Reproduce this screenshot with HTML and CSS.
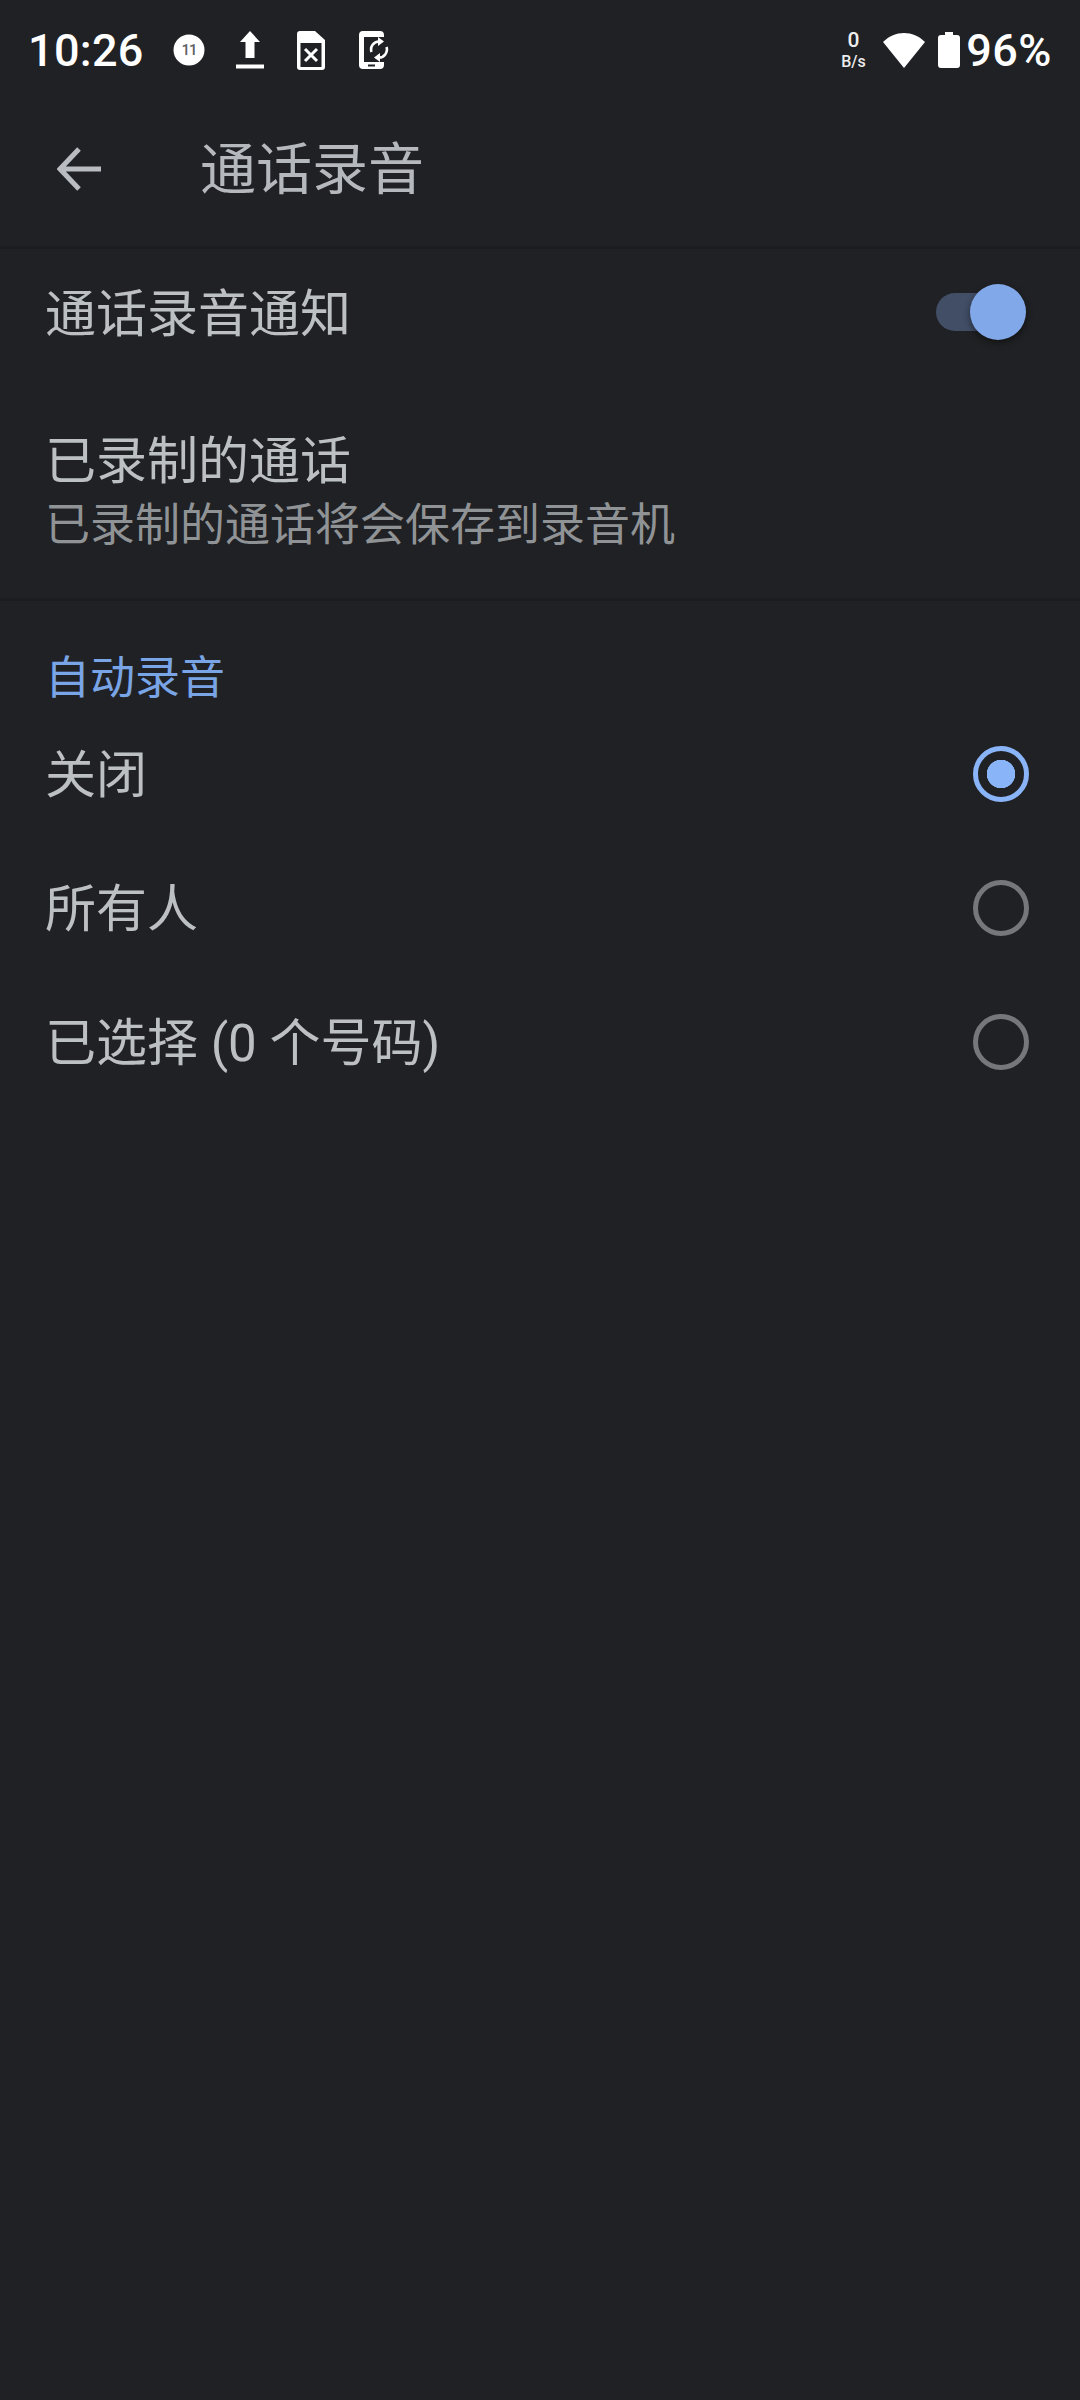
FILE: index.html
```html
<!DOCTYPE html>
<html lang="zh-CN">
<head>
<meta charset="utf-8">
<title>通话录音</title>
<link rel="stylesheet" href="styles.css">
</head>
<body>
<div class="status">
  <span class="time">10:26</span>
  <div class="status-icons">
    <svg class="ic-num" width="32" height="32" viewBox="0 0 32 32"><circle cx="16" cy="16" r="15.5" fill="#fff"/><text x="16" y="21" text-anchor="middle" class="n11">11</text></svg>
    <svg class="ic-up" width="28" height="38" viewBox="0 0 28 38"><path d="M14 0 L24 11 H18.5 V27 H9.5 V11 H4 Z M0 33.500 H28 V37.500 H0 Z" fill="#fff"/></svg>
    <svg class="ic-sim" width="28" height="40" viewBox="0 0 28 40"><path fill-rule="evenodd" d="M3 1 H18 L28 10 V37 A3 3 0 0 1 25 40 H3 A3 3 0 0 1 0 37 V4 A3 3 0 0 1 3 1 Z M3.500 13 V37 H24.500 V13 Z" fill="#fff"/><path d="M8 19 L20 31 M20 19 L8 31" stroke="#fff" stroke-width="3"/></svg>
    <svg class="ic-ph" width="30" height="40" viewBox="0 0 30 40"><path d="M4 1 H21 A4 4 0 0 1 25 5 V7 H5 V32 H25 V35 A4 4 0 0 1 21 39 H4 A4 4 0 0 1 0 35 V5 A4 4 0 0 1 4 1 Z" fill="#fff"/><path d="M9 35.500 H16" stroke="#202124" stroke-width="2"/><path d="M12.500 22 A8 8 0 0 1 20 11.500 M27.500 17 A8 8 0 0 1 20 27.500" fill="none" stroke="#fff" stroke-width="2.600"/><path d="M19 7 L25 11.500 L19 16 Z M21 23 L15 27.500 L21 32 Z" fill="#fff"/></svg>
  </div>
  <div class="status-right">
    <div class="speed"><b>0</b><small>B/s</small></div>
    <svg class="wifi" width="42" height="35" viewBox="0 0 42 35"><path d="M21 35 L0 9 C12 -3 30 -3 42 9 Z" fill="#fff"/></svg>
    <svg width="22" height="36" viewBox="0 0 22 36"><path d="M7 0 H15 V3 H19 A3 3 0 0 1 22 6 V33 A3 3 0 0 1 19 36 H3 A3 3 0 0 1 0 33 V6 A3 3 0 0 1 3 3 H7 Z" fill="#fff"/></svg>
    <span class="batt">96%</span>
  </div>
</div>
<header class="appbar">
  <svg class="back" width="44" height="44" viewBox="0 0 44 44"><path d="M44 22 H4 M22 2 L3 22 L22 42" fill="none" stroke="#b9bcc0" stroke-width="5"/></svg>
  <h1 class="title">通话录音</h1>
</header>
<section class="group first">
  <div class="row switch-row">
    <span class="label nudge">通话录音通知</span>
    <span class="switch"><span class="track"></span><span class="thumb"></span></span>
  </div>
  <div class="row two-line">
    <span class="label">已录制的通话</span>
    <span class="sub">已录制的通话将会保存到录音机</span>
  </div>
</section>
<section class="group">
  <div class="cat">自动录音</div>
  <div class="row radio-row"><span class="label nudge">关闭</span><span class="radio on"></span></div>
  <div class="row radio-row"><span class="label nudge">所有人</span><span class="radio"></span></div>
  <div class="row radio-row"><span class="label nudge">已选择 (0 个号码)</span><span class="radio"></span></div>
</section>
</body>
</html>
```
FILE: styles.css
```css
html, body { margin: 0; padding: 0; }
body {
  width: 1080px; height: 2400px; overflow: hidden;
  background: #202124; color: #bdc0c3;
  font-family: Roboto, "Noto Sans CJK SC", sans-serif;
}
.status { height: 100px; display: flex; align-items: center; padding: 0 28px 0 28px; box-sizing: border-box; }
.time { font-size: 45px; font-weight: 500; color: #fff; width: 145px; letter-spacing: .3px; }
.status-icons { display: flex; align-items: center; }
.ic-up { margin-left: 31px; }
.ic-sim { margin-left: 33px; }
.ic-ph { margin-left: 34px; }
.n11 { font-size: 15px; letter-spacing: -1px; font-family: Roboto, sans-serif; fill: #5f6164; font-weight: 500; }
.status-right { margin-left: auto; display: flex; align-items: center; gap: 13px; }
.speed { display: flex; flex-direction: column; align-items: center; color: #eeeeee; line-height: 1; margin-right: 4px; }
.speed b { font-size: 21px; font-weight: 500; }
.speed small { font-size: 16px; font-weight: 500; margin-top: 3px; }
.batt { font-size: 45px; font-weight: 500; color: #fff; margin-left: -6.500px; letter-spacing: .5px; }
.appbar { height: 146px; display: flex; align-items: center; padding: 0 0 9px 57px; box-sizing: border-box; }
.title { margin: 0 0 0 99px; padding-bottom: 9px; font-size: 56px; font-weight: 400; color: #b5b8bc; }
.group { border-top: 3px solid #1b1c1f; }
.row { display: flex; align-items: center; justify-content: space-between; padding: 0 46px 0 45px; box-sizing: border-box; }
.label { font-size: 51px; line-height: 64px; }
.nudge { margin-top: 3px; }
.switch-row { height: 129px; }
.two-line { flex-direction: column; align-items: flex-start; height: 220px; justify-content: flex-start; padding-top: 52px; }
.sub { font-size: 45px; line-height: 64px; color: #909396; }
.switch { position: relative; width: 90px; height: 56px; margin-right: 8px; margin-top: -3px; }
.track { position: absolute; left: 0; top: 9px; width: 80px; height: 38px; border-radius: 19px; background: #414e66; }
.thumb { position: absolute; right: 0; top: 0; width: 56px; height: 56px; border-radius: 50%; background: #81a8e8; box-shadow: 0 3px 7px rgba(0,0,0,.45); }
.cat { font-size: 45px; line-height: 56px; color: #79a5e6; padding: 50px 46px 0 45px; }
.radio-row { height: 134px; padding-right: 51px; }
.radio { width: 56px; height: 56px; box-sizing: border-box; border-radius: 50%; border: 5.500px solid #75777a; }
.radio.on { border-color: #8ab4f8; background: radial-gradient(circle, #8ab4f8 0 14px, transparent 14.500px); }
```
